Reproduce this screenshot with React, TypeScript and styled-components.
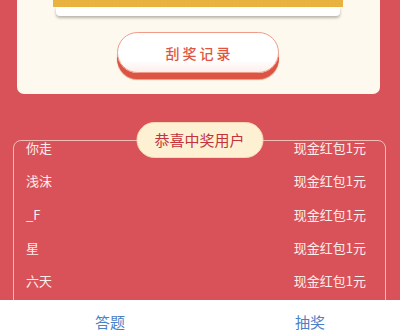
import styled, { createGlobalStyle } from 'styled-components';

const GlobalStyle = createGlobalStyle`
  html, body {
    margin: 0;
    padding: 0;
    background: #d95259;
    overflow: hidden;
    font-family: "Noto Sans CJK SC", "Noto Sans", sans-serif;
  }
`;

const winners = [
  { name: '你走', prize: '现金红包1元' },
  { name: '浅沫', prize: '现金红包1元' },
  { name: '_F', prize: '现金红包1元' },
  { name: '星', prize: '现金红包1元' },
  { name: '六天', prize: '现金红包1元' },
];

export default function App() {
  return (
    <>
      <GlobalStyle />
      <Page>
        <Card>
          <ScratchArea />
          <ScratchBase />
          <RecordButton>刮奖记录</RecordButton>
        </Card>

        <WinnerSection>
          <WinnerTitle>恭喜中奖用户</WinnerTitle>
          <WinnerFrame>
            <WinnerList>
              {winners.map((w, i) => (
                <WinnerRow key={i}>
                  <span>{w.name}</span>
                  <span>{w.prize}</span>
                </WinnerRow>
              ))}
            </WinnerList>
          </WinnerFrame>
        </WinnerSection>
      </Page>

      <TabBar>
        <TabItem>答题</TabItem>
        <TabItem>抽奖</TabItem>
      </TabBar>
    </>
  );
}

const Page = styled.div`
  display: flex;
  flex-direction: column;
`;

const Card = styled.div`
  margin: -140px 20px 0 17px;
  padding: 0 37px 15px 36px;
  background: #fdf9ee;
  border-radius: 0 0 7px 7px;
  display: flex;
  flex-direction: column;
  align-items: center;
`;

const ScratchArea = styled.div`
  align-self: stretch;
  height: 147px;
  background-color: #e9b13d;
  background-image: radial-gradient(rgba(255, 255, 255, 0.08) 1px, transparent 1px);
  background-size: 3px 3px;
`;

const ScratchBase = styled.div`
  align-self: stretch;
  margin: 0 3px;
  height: 9px;
  background: #ffffff;
  border-radius: 0 0 4px 4px;
  box-shadow: 0 2px 3px rgba(0, 0, 0, 0.28);
`;

const RecordButton = styled.button`
  margin-top: 16px;
  width: 162px;
  height: 41px;
  border: 1px solid #ef9a8a;
  border-radius: 21px;
  background: linear-gradient(#ffffff 70%, #fdeeea);
  box-shadow: 0 6px 0 #dc5442, 0 7px 1px rgba(190, 60, 40, 0.5);
  color: #e0553f;
  font-family: "Noto Sans CJK SC", sans-serif;
  font-size: 14px;
  font-weight: 500;
  letter-spacing: 3px;
  padding: 0 0 0 3px;
  margin-bottom: 6px;
  cursor: pointer;
`;

const WinnerSection = styled.div`
  position: relative;
  margin: 28px 14px 0 13px;
  padding-top: 18px;
`;

const WinnerTitle = styled.div`
  position: absolute;
  top: 0;
  left: 50%;
  transform: translateX(-50%);
  width: 127px;
  height: 36px;
  border-radius: 18px;
  background: #fdf0d3;
  border: 1px solid #f6d9b4;
  box-sizing: border-box;
  color: #c4333b;
  font-size: 15px;
  line-height: 34px;
  text-align: center;
  z-index: 1;
`;

const WinnerFrame = styled.div`
  border: 1px solid #f1bcb6;
  border-radius: 8px;
  height: 220px;
`;

const WinnerList = styled.div`
  display: flex;
  flex-direction: column;
  margin-top: -3px;
  padding: 0 19px 0 12px;
`;

const WinnerRow = styled.div`
  display: flex;
  justify-content: space-between;
  height: 20px;
  line-height: 20px;
  margin-bottom: 13.3px;
  color: #fdeeec;
  font-size: 13px;
`;

const TabBar = styled.nav`
  position: fixed;
  left: 0;
  right: 0;
  bottom: -19px;
  height: 50px;
  padding-left: 10px;
  background: #ffffff;
  display: flex;
  z-index: 2;
`;

const TabItem = styled.div`
  flex: 0 0 200px;
  padding-top: 12px;
  line-height: 20px;
  text-align: center;
  color: #4a80c6;
  font-size: 15px;
`;
